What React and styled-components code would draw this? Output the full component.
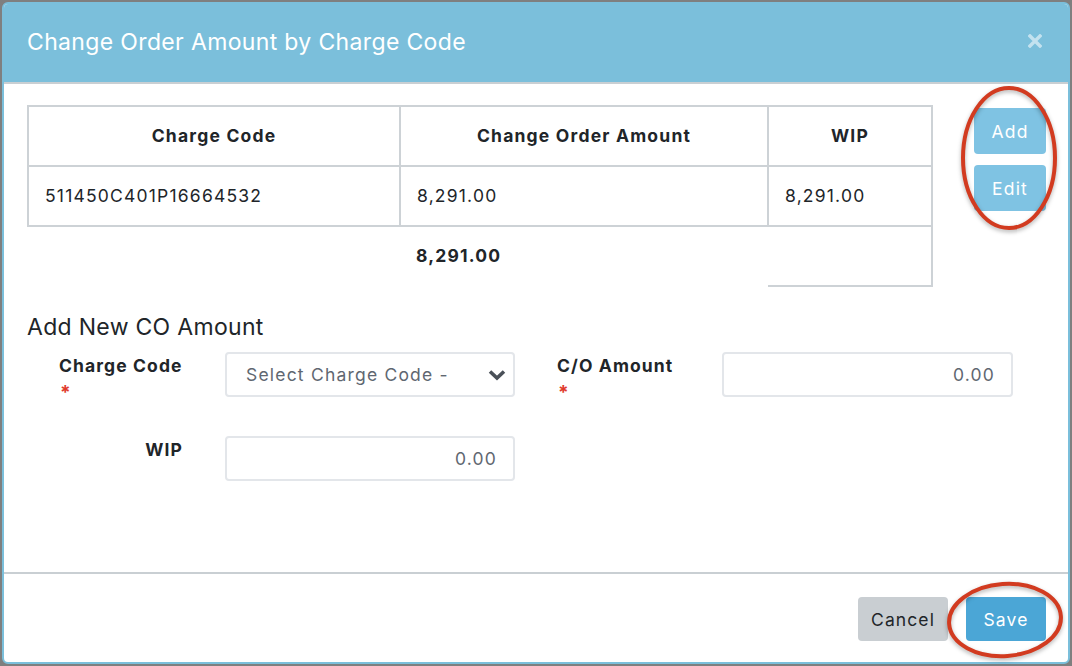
import React from "react";
import styled, { createGlobalStyle } from "styled-components";

const GlobalStyle = createGlobalStyle`
  html, body {
    margin: 0;
    padding: 0;
    background: #7f7f7f;
  }
  body {
    font-family: Inter, "Noto Sans", "Liberation Sans", sans-serif;
    color: #212529;
  }
`;

const rows = [
  { code: "511450C401P16664532", amount: "8,291.00", wip: "8,291.00" },
];

const App = () => {
  return (
    <>
      <GlobalStyle />
      <Page>
        <Modal>
          <Header>
            <Title>Change Order Amount by Charge Code</Title>
            <Close aria-label="Close">
              <svg width="14" height="14" viewBox="0 0 14 14">
                <path
                  d="M2 2 L12 12 M12 2 L2 12"
                  stroke="#c3e2ef"
                  strokeWidth="3.4"
                  strokeLinecap="square"
                />
              </svg>
            </Close>
          </Header>

          <Body>
            <TableRow>
              <Table>
                <thead>
                  <tr>
                    <Th>Charge Code</Th>
                    <Th>Change Order Amount</Th>
                    <Th>WIP</Th>
                  </tr>
                </thead>
                <tbody>
                  {rows.map(row => (
                    <tr key={row.code}>
                      <Td>{row.code}</Td>
                      <Td>{row.amount}</Td>
                      <Td>{row.wip}</Td>
                    </tr>
                  ))}
                </tbody>
                <tfoot>
                  <tr>
                    <TotalCell />
                    <TotalCell>8,291.00</TotalCell>
                    <TotalCell $boxed />
                  </tr>
                </tfoot>
              </Table>
              <SideButtons>
                <LightButton>Add</LightButton>
                <LightButton>Edit</LightButton>
              </SideButtons>
            </TableRow>

            <SectionTitle>Add New CO Amount</SectionTitle>

            <FormGrid>
              <Label $align="left">
                Charge Code
                <Required>*</Required>
              </Label>
              <SelectBox>
                <span>Select Charge Code -</span>
                <svg width="18" height="12" viewBox="0 0 18 12">
                  <path
                    d="M2 2.5 L9 9 L16 2.5"
                    fill="none"
                    stroke="#4a5058"
                    strokeWidth="3.6"
                  />
                </svg>
              </SelectBox>
              <Label $align="left">
                C/O Amount
                <Required>*</Required>
              </Label>
              <Input>0.00</Input>

              <Label $align="right">WIP</Label>
              <Input>0.00</Input>
            </FormGrid>
          </Body>

          <Footer>
            <Button $variant="cancel">Cancel</Button>
            <Button $variant="save">Save</Button>
          </Footer>
        </Modal>

        <Annotation
          $left={958}
          $top={85}
          width="102"
          height="146"
          viewBox="0 0 102 146"
        >
          <ellipse
            cx="51"
            cy="73"
            rx="46"
            ry="70"
            fill="none"
            stroke="#d23b20"
            strokeWidth="4"
          />
        </Annotation>
        <Annotation
          $left={944}
          $top={580}
          width="122"
          height="80"
          viewBox="0 0 122 80"
        >
          <ellipse
            cx="61"
            cy="40"
            rx="56"
            ry="36"
            fill="none"
            stroke="#d23b20"
            strokeWidth="4"
            transform="rotate(-4 61 40)"
          />
        </Annotation>
      </Page>
    </>
  );
};

export default App;

const Page = styled.div`
  position: relative;
  width: 1072px;
  height: 666px;
  padding: 2px;
  box-sizing: border-box;
  background: #7f7f7f;
`;

const Modal = styled.div`
  width: 1068px;
  height: 662px;
  box-sizing: border-box;
  display: flex;
  flex-direction: column;
  background: #fff;
  border: 2px solid #7bbfdb;
  border-radius: 6px;
  overflow: hidden;
`;

const Header = styled.div`
  flex: none;
  display: flex;
  align-items: center;
  justify-content: space-between;
  height: 80px;
  padding: 0 26px 0 23px;
  box-sizing: border-box;
  background: #7bbfdb;
  border-bottom: 2px solid #c9cfd3;
`;

const Title = styled.h4`
  margin: -2px 0 0;
  font-size: 23px;
  font-weight: 400;
  color: #fff;
  letter-spacing: 0.35px;
`;

const Close = styled.span`
  display: flex;
  align-items: center;
  margin-top: -4px;
`;

const Body = styled.div`
  flex: 1;
  padding: 21px 22px 0 23px;
  border-bottom: 2px solid #c9cfd3;
`;

const TableRow = styled.div`
  display: flex;
  align-items: flex-start;
  gap: 41px;
`;

const Table = styled.table`
  width: 906px;
  border-collapse: collapse;
  table-layout: fixed;
  font-size: 17.5px;
  letter-spacing: 1.2px;
  color: #212529;

  th:nth-child(1) {
    width: 372px;
  }
  th:nth-child(2) {
    width: 368px;
  }
`;

const Th = styled.th`
  height: 60px;
  padding: 0 16px 2px;
  box-sizing: border-box;
  border: 2px solid #cdd2d6;
  font-weight: 700;
  text-align: center;
`;

const Td = styled.td`
  height: 60px;
  padding: 0 16px 1px;
  box-sizing: border-box;
  border: 2px solid #cdd2d6;
  font-weight: 400;
`;

const TotalCell = styled.td`
  height: 60px;
  padding: 0 16px 2px;
  box-sizing: border-box;
  font-weight: 700;
  border-right: ${p => (p.$boxed ? "2px solid #cdd2d6" : "none")};
  border-bottom: ${p => (p.$boxed ? "2px solid #cdd2d6" : "none")};
`;

const SideButtons = styled.div`
  display: flex;
  flex-direction: column;
  gap: 11px;
  padding-top: 3px;
`;

const LightButton = styled.button`
  width: 72px;
  height: 46px;
  padding: 0;
  border: none;
  border-radius: 4px;
  background: #7fc3e3;
  color: #fff;
  font-family: inherit;
  font-size: 17.5px;
  letter-spacing: 1.2px;
`;

const SectionTitle = styled.h5`
  margin: 25px 0 0;
  font-size: 23px;
  font-weight: 400;
  line-height: 30px;
  letter-spacing: 0.3px;
  color: #212529;
`;

const FormGrid = styled.div`
  display: grid;
  grid-template-columns: 124px 290px 123px 291px;
  column-gap: 42px;
  row-gap: 32px;
  margin: 10px 0 0 32px;
`;

const Label = styled.label`
  display: flex;
  flex-direction: column;
  align-items: ${p => (p.$align === "right" ? "flex-end" : "flex-start")};
  padding-top: 2px;
  font-size: 17.5px;
  font-weight: 700;
  line-height: 24px;
  letter-spacing: 1.1px;
  white-space: nowrap;
  color: #212529;
`;

const Required = styled.span`
  color: #e03a2b;
  font-size: 19px;
  font-weight: 700;
  line-height: 22px;
  padding: 4px 0 0 1px;
`;

const Field = styled.div`
  height: 45px;
  box-sizing: border-box;
  display: flex;
  align-items: center;
  border: 2px solid #e3e6ea;
  border-radius: 4px;
  font-size: 17.5px;
  color: #5f6771;
  letter-spacing: 1.2px;
`;

const SelectBox = styled(Field)`
  justify-content: space-between;
  padding: 0 7px 0 19px;
`;

const Input = styled(Field)`
  justify-content: flex-end;
  padding: 0 16px;
`;

const Footer = styled.div`
  flex: none;
  display: flex;
  justify-content: flex-end;
  gap: 18px;
  padding: 23px 22px 21px;
`;

const Button = styled.button`
  width: ${p => (p.$variant === "save" ? "80px" : "90px")};
  height: 44px;
  padding: 0;
  border: none;
  border-radius: 4px;
  font-family: inherit;
  font-size: 17.5px;
  letter-spacing: 1.1px;
  background: ${p => (p.$variant === "save" ? "#4ba6d6" : "#c9ced2")};
  color: ${p => (p.$variant === "save" ? "#fff" : "#212529")};
`;

const Annotation = styled.svg`
  position: absolute;
  left: ${p => p.$left}px;
  top: ${p => p.$top}px;
  overflow: visible;
  filter: drop-shadow(0 2px 2px rgba(0, 0, 0, 0.3));
  pointer-events: none;
`;
